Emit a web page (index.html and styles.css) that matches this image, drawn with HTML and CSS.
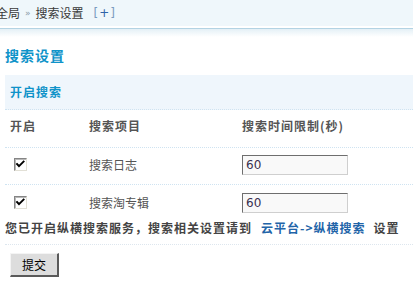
FILE: index.html
```html
<!DOCTYPE html>
<html lang="zh-CN">
<head>
<meta charset="utf-8">
<title>搜索设置</title>
<link rel="stylesheet" href="styles.css">
</head>
<body>
<div class="topbar">
  <span class="crumb first">全局</span><span class="raquo">»</span><span class="crumb">搜索设置</span><a class="add" href="#">[<span class="plus">+</span>]</a>
</div>
<div class="topline"></div>
<div class="topfade"></div>
<div class="page">
  <h3 class="title">搜索设置</h3>
  <div class="partition">开启搜索</div>
  <div class="row head">
    <div class="cell c1">开启</div>
    <div class="cell c2">搜索项目</div>
    <div class="cell c3">搜索时间限制(秒)</div>
  </div>
  <div class="row item">
    <div class="cell c1"><span class="checkbox" role="checkbox" aria-checked="true"><svg viewBox="0 0 11 11" width="11" height="11"><path d="M2 5 L4 7.2 L8.6 2.6" fill="none" stroke="#000" stroke-width="1.9" stroke-linecap="square"/></svg></span></div>
    <div class="cell c2 label">搜索日志</div>
    <div class="cell c3"><input class="txt" type="text" value="60"></div>
  </div>
  <div class="row item last">
    <div class="cell c1"><span class="checkbox" role="checkbox" aria-checked="true"><svg viewBox="0 0 11 11" width="11" height="11"><path d="M2 5 L4 7.2 L8.6 2.6" fill="none" stroke="#000" stroke-width="1.9" stroke-linecap="square"/></svg></span></div>
    <div class="cell c2 label">搜索淘专辑</div>
    <div class="cell c3"><input class="txt" type="text" value="60"></div>
  </div>
  <div class="notice">您已开启纵横搜索服务，搜索相关设置请到<a class="link" href="#">云平台-&gt;纵横搜索</a>设置</div>
  <button class="btn" type="submit">提交</button>
</div>
</body>
</html>
```
FILE: styles.css
```css
html, body {
  margin: 0;
  padding: 0;
  background: #fff;
}
body {
  font-family: "Noto Sans CJK SC", "DejaVu Sans", sans-serif;
  font-size: 12px;
  color: #333;
  overflow: hidden;
}
.topbar {
  height: 26px;
  line-height: 26px;
  background: #eff7fb;
  white-space: nowrap;
  display: flex;
  align-items: center;
  color: #3a3a3a;
}
.crumb.first {
  margin-left: -4px;
}
.raquo {
  font-family: "DejaVu Sans", sans-serif;
  font-size: 9px;
  color: #8a9aa8;
  margin: 0 5px 0 5px;
}
.add {
  margin-left: 10px;
  color: #7a9cc0;
  text-decoration: none;
  font-family: "DejaVu Sans", sans-serif;
  font-size: 12px;
}
.add .plus {
  color: #2f64a8;
  margin: 0 1px;
}
.topline {
  margin-top: 2px;
  height: 1px;
  background: #b3d3e3;
}
.topfade {
  height: 8px;
  background: linear-gradient(#e4f0f6, #ffffff);
}
.page {
  padding-left: 5px;
}
.title {
  margin: 8px 0 10px 0;
  line-height: 20px;
  font-size: 14px;
  font-weight: bold;
  letter-spacing: 1px;
  color: #0f93c9;
}
.partition {
  height: 34px;
  line-height: 33px;
  padding-left: 5px;
  background: #eff6fc;
  border-bottom: 1px dotted #cfe3f1;
  color: #0f93c9;
  font-weight: bold;
  letter-spacing: 1px;
}
.row {
  display: grid;
  grid-template-columns: 79px 153px 1fr;
  align-items: center;
  box-sizing: border-box;
}
.cell {
  padding-left: 5px;
  line-height: 14px;
}
.head {
  height: 38px;
  padding-bottom: 5px;
  border-bottom: 1px dotted #cfe3f1;
  font-weight: bold;
  letter-spacing: 1px;
  color: #555;
}
.item {
  height: 37px;
  padding-bottom: 3px;
  border-bottom: 1px dotted #cfe3f1;
  color: #555;
}
.item.last {
  height: 35px;
  padding-bottom: 0;
  border-bottom: none;
}
.checkbox {
  display: flex;
  align-items: center;
  justify-content: center;
  box-sizing: border-box;
  width: 13px;
  height: 13px;
  margin-left: 4px;
  background: #fff;
  border-top: 1px solid #858585;
  border-left: 1px solid #858585;
  border-right: 1px solid #e2e0d6;
  border-bottom: 1px solid #e2e0d6;
  box-shadow: inset 1px 1px 0 #b8b8b8;
}
.checkbox svg {
  display: block;
}
.txt {
  display: block;
  box-sizing: border-box;
  width: 106px;
  height: 20px;
  margin: 0;
  padding: 0 0 0 3px;
  border-top: 1px solid #6e6e6e;
  border-left: 1px solid #6e6e6e;
  border-right: 1px solid #cfcfcf;
  border-bottom: 1px solid #cfcfcf;
  background: #f9f9f9;
  font-family: "DejaVu Sans", sans-serif;
  font-size: 12px;
  color: #3a3050;
  outline: none;
}
.notice {
  line-height: 16px;
  padding-bottom: 8px;
  border-bottom: 1px dotted #dde6ee;
  font-weight: bold;
  letter-spacing: 1px;
  color: #444;
  white-space: nowrap;
}
.link {
  color: #2264a8;
  text-decoration: none;
  margin: 0 8px 0 9px;
}
.btn {
  display: block;
  margin: 8px 0 0 5px;
  width: 49px;
  height: 24px;
  padding: 0;
  box-sizing: border-box;
  background: #dddddd;
  border-top: 1px solid #f4f4f4;
  border-left: 1px solid #f4f4f4;
  border-right: 2px solid #5a5a5a;
  border-bottom: 2px solid #5a5a5a;
  font-family: "Noto Sans CJK SC", sans-serif;
  font-size: 12px;
  color: #000;
  line-height: 20px;
}
```
